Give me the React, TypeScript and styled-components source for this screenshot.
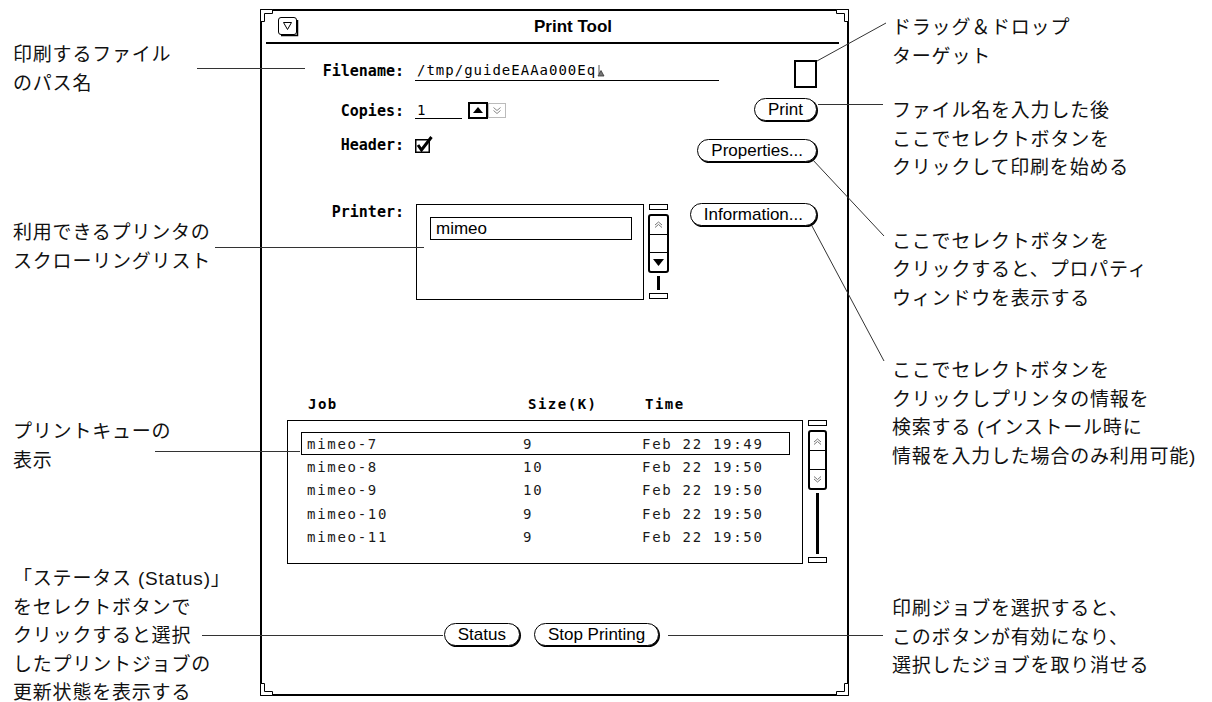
import styled, { createGlobalStyle } from "styled-components";

const mono = `"DejaVu Sans Mono", "Liberation Mono", monospace`;
const sans = `"Liberation Sans", "Noto Sans CJK JP", sans-serif`;

const GlobalStyle = createGlobalStyle`
  html, body {
    margin: 0;
    padding: 0;
    background: #fff;
    overflow: hidden;
  }
`;

const Page = styled.div`
  position: relative;
  display: flex;
  align-items: flex-start;
  width: 1212px;
  height: 702px;
  overflow: hidden;
`;

const LeftNotes = styled.div`
  flex: none;
  box-sizing: border-box;
  width: 260px;
  padding-left: 13px;
  display: flex;
  flex-direction: column;
`;

const RightNotes = styled.div`
  flex: 1;
  padding-left: 43px;
  display: flex;
  flex-direction: column;
`;

const Note = styled.div<{ $mt: number }>`
  margin-top: ${(p) => p.$mt}px;
  font-family: ${sans};
  font-size: 19px;
  line-height: 28.5px;
  letter-spacing: 0.8px;
  color: #111;
  white-space: nowrap;
`;

const Window = styled.div`
  position: relative;
  flex: none;
  box-sizing: border-box;
  width: 589px;
  height: 687px;
  margin-top: 9px;
  border: 2px solid #000;
  display: flex;
  flex-direction: column;
  font-family: ${sans};
  color: #000;
`;

const Corner = styled.svg<{ $x: "left" | "right"; $y: "top" | "bottom" }>`
  position: absolute;
  ${(p) => p.$x}: -2px;
  ${(p) => p.$y}: -2px;
  transform: scale(
    ${(p) => (p.$x === "right" ? -1 : 1)},
    ${(p) => (p.$y === "bottom" ? -1 : 1)}
  );
`;

const TitleBar = styled.div`
  display: flex;
  align-items: center;
  height: 31px;
  padding-left: 16px;
`;

const Title = styled.div`
  flex: 1;
  text-align: center;
  font-size: 17px;
  font-weight: bold;
`;

const TitleRule = styled.div`
  height: 2px;
  margin: 0 8px 0 4px;
  background: #000;
`;

const Top = styled.div`
  display: flex;
`;

const Form = styled.div`
  flex: 1;
  min-width: 0;
  display: flex;
  flex-direction: column;
`;

const Field = styled.div<{ $mt: number; $top?: boolean }>`
  display: grid;
  grid-template-columns: 142px auto;
  column-gap: 11px;
  align-items: ${(p) => (p.$top ? "start" : "center")};
  margin-top: ${(p) => p.$mt}px;
`;

const Label = styled.span`
  font-family: ${mono};
  font-weight: bold;
  font-size: 15px;
  line-height: 16px;
  text-align: right;
  white-space: nowrap;
`;

const Cell = styled.div`
  display: flex;
  align-items: center;
  gap: 6px;
`;

const TextValue = styled.span<{ $w: number; $lh: number }>`
  display: inline-flex;
  align-items: center;
  flex: none;
  box-sizing: border-box;
  width: ${(p) => p.$w}px;
  padding-left: 2px;
  line-height: ${(p) => p.$lh}px;
  border-bottom: 1px solid #000;
  font-family: ${mono};
  font-size: 14px;
  letter-spacing: 1px;
  white-space: nowrap;
`;

const Side = styled.div`
  flex: none;
  display: flex;
  flex-direction: column;
  align-items: flex-end;
  padding-right: 30px;
`;

const DropTarget = styled.div`
  box-sizing: border-box;
  width: 23px;
  height: 28px;
  margin-top: 16px;
  border: 2px solid #000;
`;

const Button = styled.button<{ $mt?: number }>`
  box-sizing: border-box;
  height: 23px;
  margin: ${(p) => p.$mt ?? 0}px 0 0;
  padding: 0 13px;
  border: 1px solid #000;
  border-radius: 12px;
  box-shadow: 1px 1px 0 #000;
  background: #fff;
  color: #000;
  font-family: ${sans};
  font-size: 17px;
  line-height: 21px;
  white-space: nowrap;
`;

const ListRow = styled.div<{ $gap: number; $mt?: number }>`
  display: flex;
  gap: ${(p) => p.$gap}px;
  margin-top: ${(p) => p.$mt ?? 0}px;
`;

const PrinterList = styled.div`
  box-sizing: border-box;
  width: 228px;
  height: 96px;
  margin-left: 1px;
  padding: 12px 0 0 13px;
  border: 1px solid #000;
`;

const PrinterItem = styled.div`
  box-sizing: border-box;
  width: 202px;
  height: 23px;
  padding-left: 5px;
  border: 1px solid #000;
  font-size: 17px;
  line-height: 21px;
`;

const Scroll = styled.div<{ $w: number; $h: number }>`
  display: flex;
  flex-direction: column;
  align-items: center;
  width: ${(p) => p.$w}px;
  height: ${(p) => p.$h}px;
`;

const ScrollCap = styled.div`
  flex: none;
  box-sizing: border-box;
  width: 19px;
  height: 6px;
  border: 1px solid #000;
`;

const Elevator = styled.div<{ $h: number }>`
  flex: none;
  box-sizing: border-box;
  width: 100%;
  height: ${(p) => p.$h}px;
  margin-top: 4px;
  border: 2px solid #000;
  border-radius: 3px;
  display: flex;
  flex-direction: column;
`;

const ElevatorCell = styled.div`
  flex: 1;
  display: flex;
  align-items: center;
  justify-content: center;
  & + & {
    border-top: 1px solid #000;
  }
`;

const Cable = styled.div<{ $h?: number }>`
  width: 3px;
  margin: 3px 0;
  background: #000;
  ${(p) => (p.$h ? `flex: none; height: ${p.$h}px;` : "flex: 1;")}
`;

const Jobs = styled.div`
  display: flex;
  flex-direction: column;
  margin-top: 96px;
  padding-left: 25px;
`;

const JobHead = styled.div`
  display: grid;
  grid-template-columns: 220px 117px auto;
  padding-left: 21px;
  font-family: ${mono};
  font-weight: bold;
  font-size: 14px;
  line-height: 16px;
  letter-spacing: 1.5px;
`;

const JobBox = styled.div`
  box-sizing: border-box;
  width: 516px;
  height: 144px;
  padding: 11px 0 0 13px;
  border: 1px solid #000;
`;

const JobRow = styled.div<{ $sel?: boolean }>`
  box-sizing: border-box;
  width: 489px;
  height: 23.4px;
  padding-left: 5px;
  border: 1px solid ${(p) => (p.$sel ? "#000" : "transparent")};
  display: grid;
  grid-template-columns: 216px 119px auto;
  align-items: center;
  color: #1a1a1a;
  font-family: ${mono};
  font-size: 14px;
  letter-spacing: 1.7px;
  white-space: nowrap;
`;

const ButtonBar = styled.div`
  display: flex;
  justify-content: center;
  gap: 14px;
  margin-top: 59px;
  padding-right: 6px;
`;

const Leaders = styled.svg`
  position: absolute;
  left: 0;
  top: 0;
  pointer-events: none;
`;

const leftNotes = [
  { mt: 41, lines: ["印刷するファイル", "のパス名"] },
  { mt: 121, lines: ["利用できるプリンタの", "スクローリングリスト"] },
  { mt: 142, lines: ["プリントキューの", "表示"] },
  {
    mt: 90,
    lines: [
      "「ステータス (Status)」",
      "をセレクトボタンで",
      "クリックすると選択",
      "したプリントジョブの",
      "更新状態を表示する",
    ],
  },
];

const rightNotes = [
  { mt: 14, lines: ["ドラッグ＆ドロップ", "ターゲット"] },
  {
    mt: 26,
    lines: ["ファイル名を入力した後", "ここでセレクトボタンを", "クリックして印刷を始める"],
  },
  {
    mt: 45,
    lines: ["ここでセレクトボタンを", "クリックすると、プロパティ", "ウィンドウを表示する"],
  },
  {
    mt: 44,
    lines: [
      "ここでセレクトボタンを",
      "クリックしプリンタの情報を",
      "検索する (インストール時に",
      "情報を入力した場合のみ利用可能)",
    ],
  },
  {
    mt: 124,
    lines: ["印刷ジョブを選択すると、", "このボタンが有効になり、", "選択したジョブを取り消せる"],
  },
];

const jobs = [
  { name: "mimeo-7", size: "9", time: "Feb 22 19:49" },
  { name: "mimeo-8", size: "10", time: "Feb 22 19:50" },
  { name: "mimeo-9", size: "10", time: "Feb 22 19:50" },
  { name: "mimeo-10", size: "9", time: "Feb 22 19:50" },
  { name: "mimeo-11", size: "9", time: "Feb 22 19:50" },
];

const leaderLines = [
  [197, 68.5, 305, 68.5],
  [215, 247.5, 424, 247.5],
  [155, 451.5, 300, 451.5],
  [202, 635.5, 443, 635.5],
  [817, 61, 886, 23],
  [818, 104.5, 883, 104.5],
  [812, 159, 884, 236],
  [812, 226, 884, 361],
  [668, 635.5, 883, 635.5],
];

const CornerMark = ({ x, y }: { x: "left" | "right"; y: "top" | "bottom" }) => (
  <Corner $x={x} $y={y} width="13" height="13" viewBox="0 0 13 13">
    <path d="M0.5 12.5V0.5H12.5V4.5H4.5V12.5Z" fill="#fff" stroke="#000" />
  </Corner>
);

const MenuMark = () => (
  <svg width="21" height="20" viewBox="0 0 21 20">
    <rect x="0.5" y="0.5" width="18" height="17" rx="2.5" fill="#fff" stroke="#000" />
    <path d="M3 18.5H19.5V3" fill="none" stroke="#000" strokeWidth="1.5" />
    <path d="M5.5 5.5H13.5L9.5 12.5Z" fill="none" stroke="#000" />
  </svg>
);

const Caret = () => (
  <svg width="8" height="13" viewBox="0 0 8 13" style={{ marginLeft: 1 }}>
    <path d="M2 1V10" stroke="#555" />
    <path d="M1 12L4 6.5L7 12Z" fill="#777" stroke="#333" strokeWidth="0.8" />
  </svg>
);

const Spinner = () => (
  <svg width="39" height="17" viewBox="0 0 39 17">
    <rect x="1" y="1" width="18" height="15" fill="none" stroke="#000" strokeWidth="2" />
    <path d="M5 11L10 5L15 11Z" fill="#000" />
    <rect x="20.5" y="1.5" width="17" height="14" fill="none" stroke="#777" strokeDasharray="1 1" />
    <path d="M25.5 5.5L29 8.5L32.5 5.5M25.5 8.5L29 11.5L32.5 8.5" fill="none" stroke="#888" />
  </svg>
);

const CheckBox = () => (
  <svg width="18" height="17" viewBox="0 0 18 17">
    <rect x="0.75" y="3.75" width="13.5" height="12.5" fill="none" stroke="#000" strokeWidth="1.5" />
    <path d="M3 9L6.5 14L16.5 1" fill="none" stroke="#000" strokeWidth="3" />
  </svg>
);

const UpChevron = () => (
  <svg width="9" height="7" viewBox="0 0 9 7">
    <path d="M1 4L4.5 1L8 4M1 6.5L4.5 3.5L8 6.5" fill="none" stroke="#777" />
  </svg>
);

const DownChevron = () => (
  <svg width="9" height="7" viewBox="0 0 9 7">
    <path d="M1 0.5L4.5 3.5L8 0.5M1 3L4.5 6L8 3" fill="none" stroke="#777" />
  </svg>
);

const SolidDown = () => (
  <svg width="11" height="7" viewBox="0 0 11 7">
    <path d="M0 0H11L5.5 7Z" fill="#000" />
  </svg>
);

const App = () => {
  return (
    <>
      <GlobalStyle />
      <Page>
        <LeftNotes>
          {leftNotes.map((n, i) => (
            <Note key={i} $mt={n.mt}>
              {n.lines.map((l) => (
                <div key={l}>{l}</div>
              ))}
            </Note>
          ))}
        </LeftNotes>

        <Window>
          <CornerMark x="left" y="top" />
          <CornerMark x="right" y="top" />
          <CornerMark x="left" y="bottom" />
          <CornerMark x="right" y="bottom" />

          <TitleBar>
            <MenuMark />
            <Title>Print Tool</Title>
          </TitleBar>
          <TitleRule />

          <Top>
            <Form>
              <Field $mt={16}>
                <Label>Filename:</Label>
                <Cell>
                  <TextValue $w={304} $lh={20}>
                    /tmp/guideEAAa000Eq
                    <Caret />
                  </TextValue>
                </Cell>
              </Field>
              <Field $mt={21}>
                <Label>Copies:</Label>
                <Cell>
                  <TextValue $w={47} $lh={16}>
                    1
                  </TextValue>
                  <Spinner />
                </Cell>
              </Field>
              <Field $mt={17}>
                <Label>Header:</Label>
                <Cell>
                  <CheckBox />
                </Cell>
              </Field>
              <Field $mt={51} $top>
                <Label>Printer:</Label>
                <ListRow $gap={4}>
                  <PrinterList>
                    <PrinterItem>mimeo</PrinterItem>
                  </PrinterList>
                  <Scroll $w={21} $h={95}>
                    <ScrollCap />
                    <Elevator $h={59}>
                      <ElevatorCell>
                        <UpChevron />
                      </ElevatorCell>
                      <ElevatorCell />
                      <ElevatorCell>
                        <SolidDown />
                      </ElevatorCell>
                    </Elevator>
                    <Cable $h={14} />
                    <ScrollCap />
                  </Scroll>
                </ListRow>
              </Field>
            </Form>

            <Side>
              <DropTarget />
              <Button $mt={10}>Print</Button>
              <Button $mt={18}>Properties...</Button>
              <Button $mt={41}>Information...</Button>
            </Side>
          </Top>

          <Jobs>
            <JobHead>
              <span>Job</span>
              <span>Size(K)</span>
              <span>Time</span>
            </JobHead>
            <ListRow $gap={5} $mt={8}>
              <JobBox>
                {jobs.map((j, i) => (
                  <JobRow key={j.name} $sel={i === 0}>
                    <span>{j.name}</span>
                    <span>{j.size}</span>
                    <span>{j.time}</span>
                  </JobRow>
                ))}
              </JobBox>
              <Scroll $w={19} $h={143}>
                <ScrollCap />
                <Elevator $h={60}>
                  <ElevatorCell>
                    <UpChevron />
                  </ElevatorCell>
                  <ElevatorCell />
                  <ElevatorCell>
                    <DownChevron />
                  </ElevatorCell>
                </Elevator>
                <Cable />
                <ScrollCap />
              </Scroll>
            </ListRow>
          </Jobs>

          <ButtonBar>
            <Button>Status</Button>
            <Button>Stop Printing</Button>
          </ButtonBar>
        </Window>

        <RightNotes>
          {rightNotes.map((n, i) => (
            <Note key={i} $mt={n.mt}>
              {n.lines.map((l) => (
                <div key={l}>{l}</div>
              ))}
            </Note>
          ))}
        </RightNotes>

        <Leaders width="1212" height="702" viewBox="0 0 1212 702">
          {leaderLines.map(([x1, y1, x2, y2], i) => (
            <line key={i} x1={x1} y1={y1} x2={x2} y2={y2} stroke="#333" strokeWidth="1" />
          ))}
        </Leaders>
      </Page>
    </>
  );
};

export default App;
